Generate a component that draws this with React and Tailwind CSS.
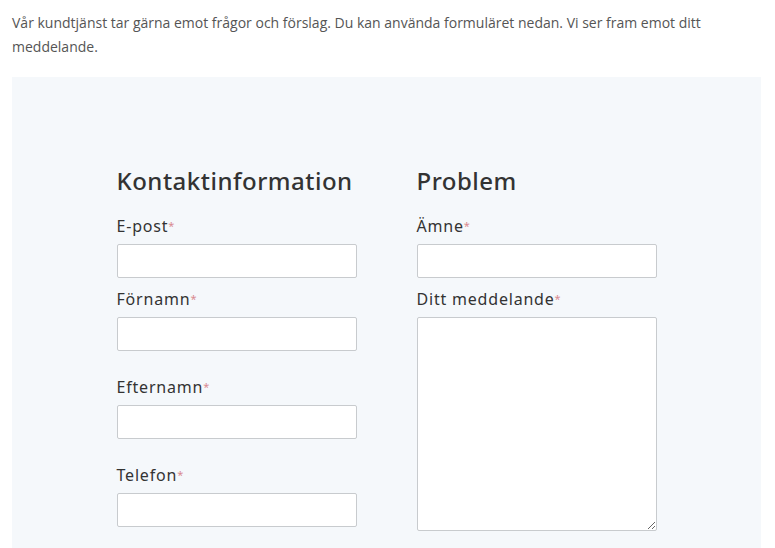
const Label = ({ children }) => (
  <label className="block text-[16px] leading-[20px] tracking-[0.8px] text-[#333] mb-2">
    {children}
    <span className="text-[#d98a90] text-[11px] align-top">*</span>
  </label>
);

const Field = ({ label, className = "" }) => (
  <div className={className}>
    <Label>{label}</Label>
    <input
      type="text"
      className="block w-full h-[34px] bg-white border border-[#c8cbce] rounded-[2px] outline-none"
    />
  </div>
);

export default function App() {
  return (
    <div
      className="min-h-[548px] bg-white px-3 pt-[11px]"
      style={{ fontFamily: '"Open Sans", "Noto Sans", sans-serif' }}
    >
      <p className="text-[14px] leading-[24px] text-[#555] pr-[60px]">
        Vår kundtjänst tar gärna emot frågor och förslag. Du kan använda formuläret nedan. Vi ser fram emot ditt meddelande.
      </p>
      <div className="mt-[18px] mr-[2px] bg-[#f5f8fb] pt-[90px] pb-10 h-[480px]">
        <div
          className="mx-auto w-[540px] grid grid-cols-[240px_240px] gap-x-[60px]"
          style={{ fontFamily: '"Noto Sans", sans-serif' }}
        >
          <div>
            <h2 className="text-[24px] leading-[28px] font-medium tracking-[0.5px] text-[#333] mb-[21px]">
              Kontaktinformation
            </h2>
            <Field label="E-post" className="mb-[11px]" />
            <Field label="Förnamn" className="mb-[26px]" />
            <Field label="Efternamn" className="mb-[26px]" />
            <Field label="Telefon" />
          </div>
          <div>
            <h2 className="text-[24px] leading-[28px] font-medium tracking-[0.5px] text-[#333] mb-[21px]">
              Problem
            </h2>
            <Field label="Ämne" className="mb-[11px]" />
            <div>
              <Label>Ditt meddelande</Label>
              <textarea className="block w-full h-[214px] bg-white border border-[#c8cbce] rounded-[2px] outline-none" />
            </div>
          </div>
        </div>
      </div>
    </div>
  );
}
